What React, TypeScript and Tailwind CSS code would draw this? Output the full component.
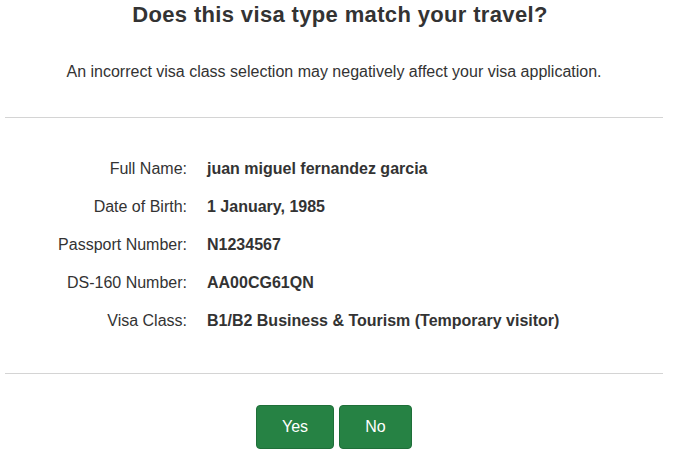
import React from "react";

const rows: [string, string][] = [
  ["Full Name:", "juan miguel fernandez garcia"],
  ["Date of Birth:", "1 January, 1985"],
  ["Passport Number:", "N1234567"],
  ["DS-160 Number:", "AA00CG61QN"],
  ["Visa Class:", "B1/B2 Business & Tourism (Temporary visitor)"],
];

export default function App() {
  return (
    <div
      className="w-[681px] h-[475px] bg-white text-[#333333] overflow-hidden"
      style={{ fontFamily: '"Liberation Sans", Arial, sans-serif' }}
    >
      <div className="w-[658px] ml-[5px]">
        <h1 className="text-[22px] leading-[30px] font-bold text-center tracking-[0.35px] pl-[12px]">
          Does this visa type match your travel?
        </h1>
        <p className="text-[16px] leading-[22px] text-center mt-[31px]">
          An incorrect visa class selection may negatively affect your visa application.
        </p>
        <div className="h-px bg-[#d4d4d4] mt-[34px]" />
        <div className="pt-[40px] pb-[41px] flex flex-col gap-[16px]">
          {rows.map(([k, v]) => (
            <div key={k} className="flex text-[16px] leading-[22px]">
              <div className="w-[182px] text-right shrink-0">{k}</div>
              <div className="pl-[20px] font-bold">{v}</div>
            </div>
          ))}
        </div>
        <div className="h-px bg-[#d4d4d4]" />
        <div className="flex justify-center gap-[5px] mt-[31px]">
          <button className="w-[78px] h-[44px] rounded-[4px] bg-[#268244] border border-[#1f6f39] text-white text-[16px]">
            Yes
          </button>
          <button className="w-[73px] h-[44px] rounded-[4px] bg-[#268244] border border-[#1f6f39] text-white text-[16px]">
            No
          </button>
        </div>
      </div>
    </div>
  );
}
